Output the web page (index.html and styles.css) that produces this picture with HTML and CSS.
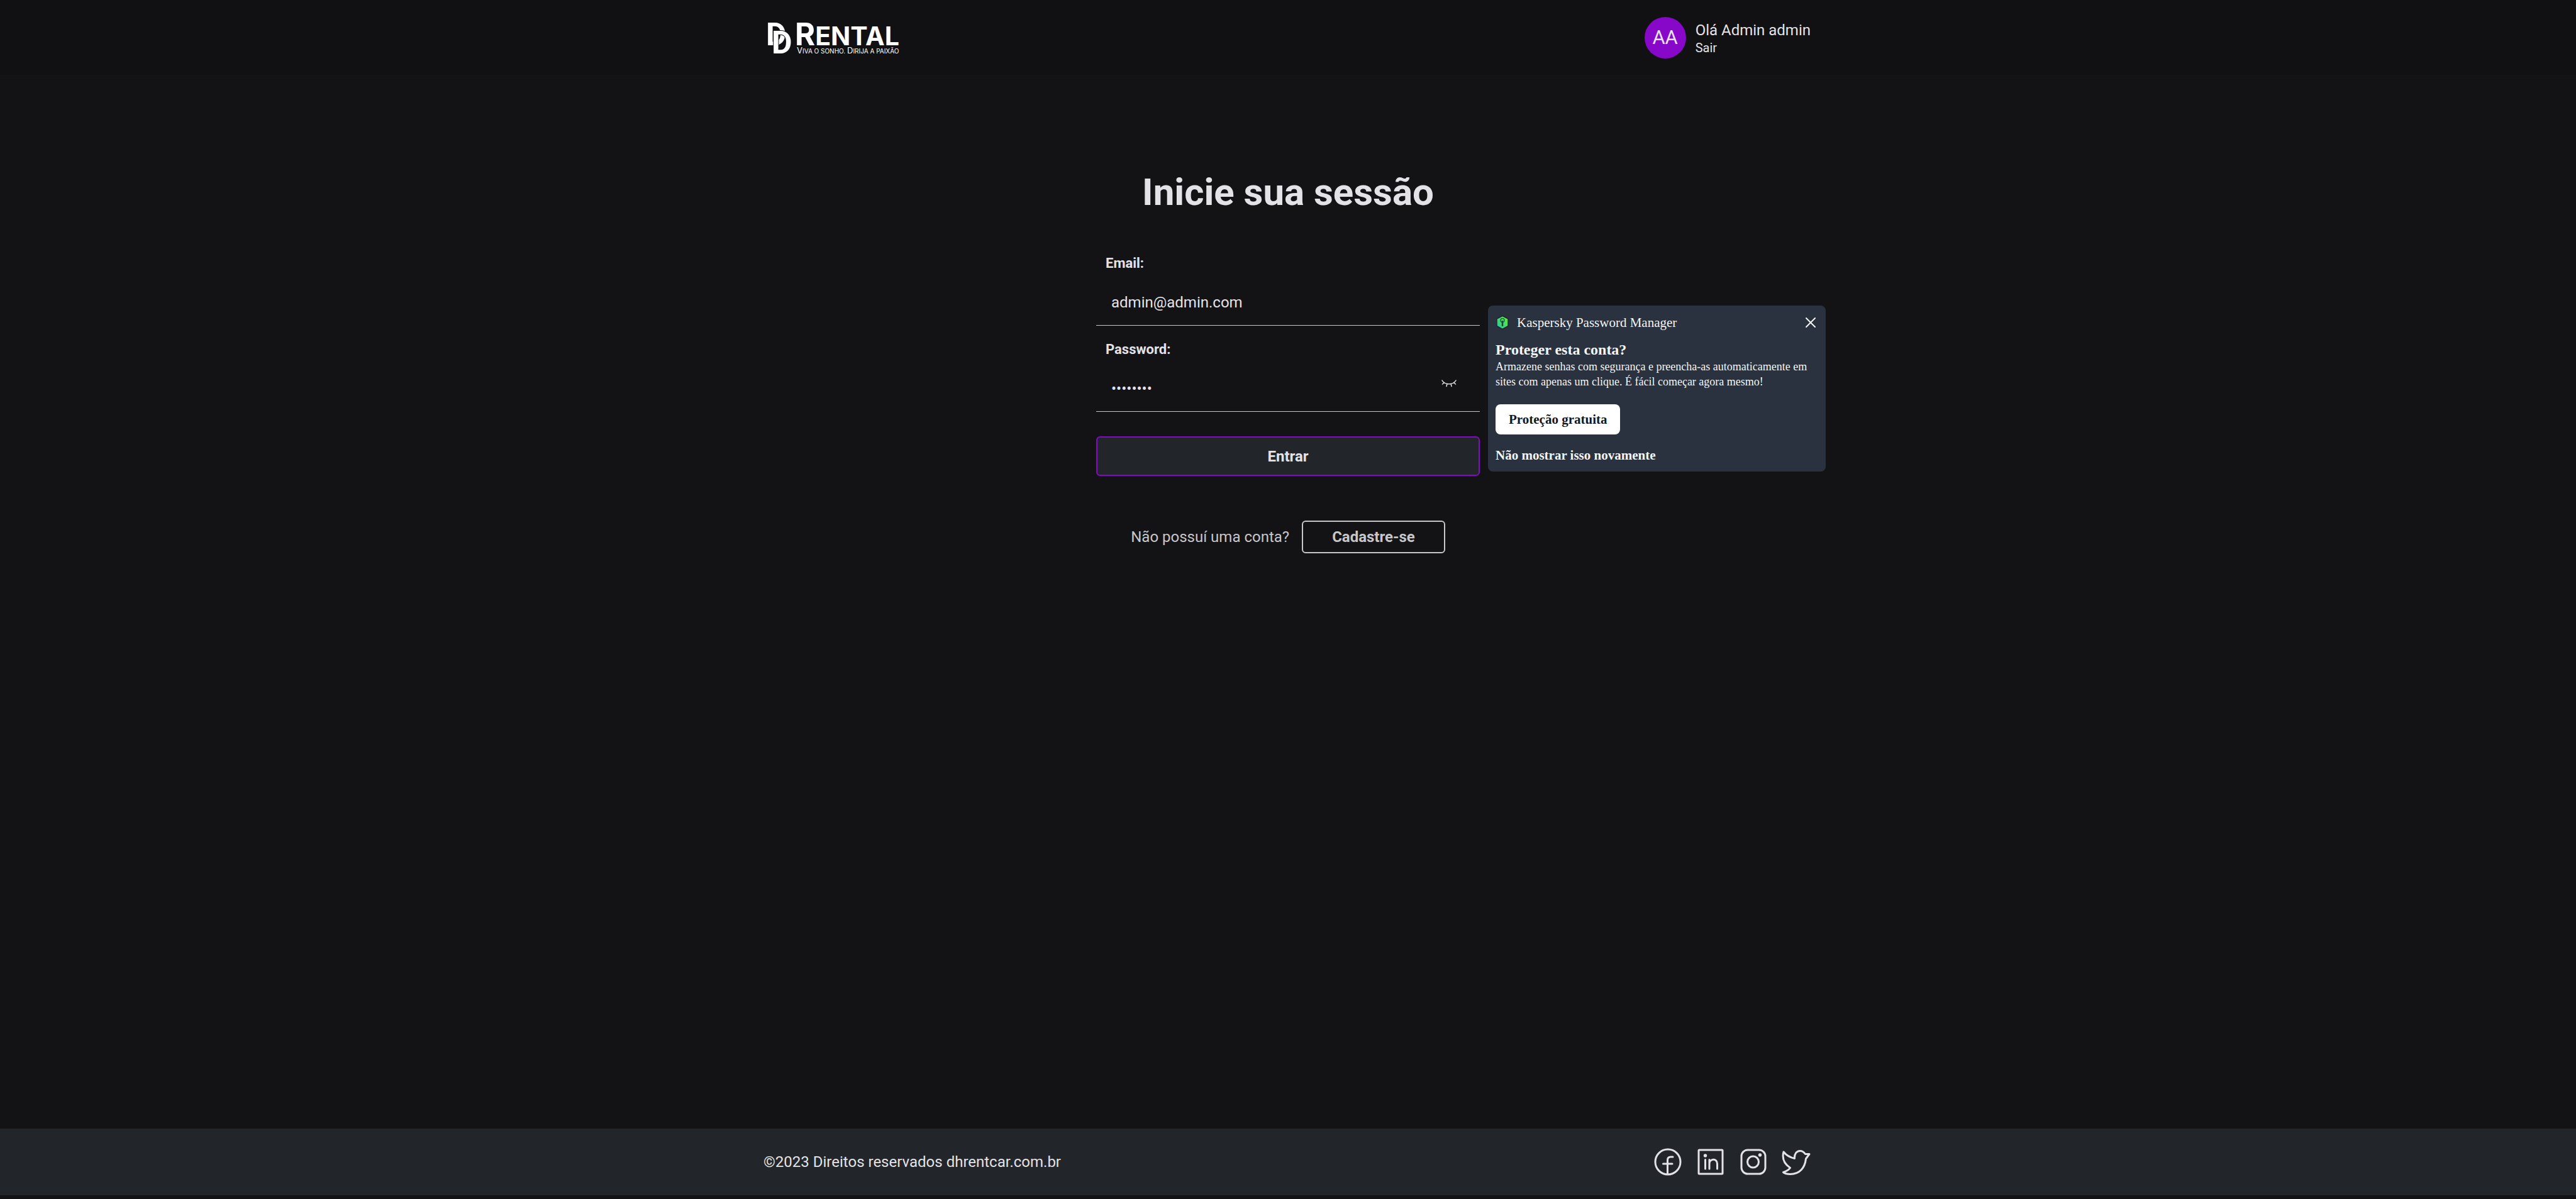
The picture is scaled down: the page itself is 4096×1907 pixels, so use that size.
FILE: index.html
```html
<!DOCTYPE html>
<html lang="pt-BR">
<head>
<meta charset="utf-8">
<meta name="viewport" content="width=device-width, initial-scale=1">
<title>DD Rental</title>
<link rel="stylesheet" href="styles.css">
</head>
<body>
<header class="header">
  <div class="container header-row">
    <a class="logo" href="#" aria-label="DD Rental">
      <svg width="226" height="80" viewBox="0 -12 226 80">
        <text class="logo-d" x="4" y="40">D</text>
        <text class="logo-d logo-d-front" x="13" y="53">D</text>
        <text class="logo-name" x="50" y="40"><tspan class="logo-cap">R</tspan>ENTAL</text>
        <text class="logo-tag" x="53" y="53"><tspan class="logo-tag-cap">V</tspan>IVA O SONHO. <tspan class="logo-tag-cap">D</tspan>IRIJA A PAIXÃO</text>
      </svg>
    </a>
    <div class="user">
      <span class="avatar">AA</span>
      <div class="user-info">
        <span class="user-name">Olá Admin admin</span>
        <a class="logout" href="#">Sair</a>
      </div>
    </div>
  </div>
</header>

<main class="main">
  <div class="login">
    <h1 class="title">Inicie sua sessão</h1>
    <form class="form">
      <label class="label" for="email">Email:</label>
      <input class="input" id="email" type="email" value="admin@admin.com">
      <label class="label" for="password">Password:</label>
      <div class="password">
        <input class="input" id="password" type="password" value="12345678">
        <button class="eye" type="button" aria-label="Mostrar senha">
          <svg width="24" height="12" viewBox="0 0 24 12" fill="none" stroke="currentColor" stroke-width="1.5" stroke-linecap="round">
            <path d="M1 1C5 8.500 19 8.500 23 1M4.500 4.500L1.500 7M19.500 4.500L22.500 7M9 6.500L8 10.500M15 6.500L16 10.500"/>
          </svg>
        </button>
      </div>
      <button class="submit" type="button">Entrar</button>
    </form>
    <div class="signup">
      <span>Não possuí uma conta?</span>
      <a class="signup-link" href="#">Cadastre-se</a>
    </div>

    <aside class="popup">
      <div class="popup-head">
        <svg width="22" height="24" viewBox="0 0 22 24">
          <defs>
            <linearGradient id="shield" x1="1" y1="0" x2="0" y2="1">
              <stop offset="0.200" stop-color="#5fe64a"/>
              <stop offset="1" stop-color="#1fc8a4"/>
            </linearGradient>
          </defs>
          <path d="M11 1.500L20 6V17.500L11 22.500L2 17.500V6Z" fill="url(#shield)" stroke="#1d2a33" stroke-width="1.500" stroke-linejoin="round"/>
          <circle cx="11" cy="8.500" r="3" fill="none" stroke="#1c6b42" stroke-width="1.500"/>
          <path d="M11 9V18" stroke="#174b38" stroke-width="2.500"/>
        </svg>
        <span class="popup-name">Kaspersky Password Manager</span>
        <button class="close" type="button" aria-label="Fechar">
          <svg width="16" height="16" viewBox="0 0 16 16" fill="none" stroke="currentColor" stroke-width="2" stroke-linecap="round"><path d="M1 1L15 15M15 1L1 15"/></svg>
        </button>
      </div>
      <h2 class="popup-title">Proteger esta conta?</h2>
      <p class="popup-text">Armazene senhas com segurança e preencha-as automaticamente em sites com apenas um clique. É fácil começar agora mesmo!</p>
      <button class="protect" type="button">Proteção gratuita</button>
      <a class="dismiss" href="#">Não mostrar isso novamente</a>
    </aside>
  </div>
</main>

<footer class="footer">
  <div class="container footer-row">
    <span>©2023 Direitos reservados dhrentcar.com.br</span>
    <nav class="social">
      <a href="#" aria-label="Facebook">
        <svg width="46" height="44" viewBox="0 0 46 44"><circle cx="23" cy="22" r="20"/><path d="M22.500 41V19Q22.500 14 27.500 14H31M15.500 25H30"/></svg>
      </a>
      <a href="#" aria-label="LinkedIn">
        <svg width="46" height="44" viewBox="0 0 46 44"><rect x="4" y="3" width="38" height="38" rx="1"/><path d="M14.500 18.500V33M21 33V18.500M21 25C21 16.500 33.500 15.500 33.500 25V33"/><circle class="dot" cx="14.500" cy="12" r="2.700"/></svg>
      </a>
      <a href="#" aria-label="Instagram">
        <svg width="46" height="44" viewBox="0 0 46 44"><rect x="4" y="3" width="38" height="38" rx="10"/><circle cx="22.500" cy="22" r="9"/><circle class="dot" cx="33.500" cy="11" r="2.700"/></svg>
      </a>
      <a href="#" aria-label="Twitter">
        <svg width="46" height="44" viewBox="0 0 46 44"><path d="M3 6C7 11 13.500 15 20.500 16.500C20 9 24 4.500 29 4.500C33 4.500 35.500 6.500 37.500 9.500L44 9.500L38.500 17C37 31 29 41.500 13.500 41.500C9 41.500 5 40.500 2.500 38.500C7 37 11 35 13.500 31.500C3 24.500 .5 15.500 3 6Z"/></svg>
      </a>
    </nav>
  </div>
</footer>
</body>
</html>
```
FILE: styles.css
```css
* { box-sizing: border-box; }

body {
  margin: 0;
  min-height: 100vh;
  display: flex;
  flex-direction: column;
  background: #131315;
  color: #e3e2e6;
  font-family: Roboto, "Liberation Sans", sans-serif;
  font-size: 24px;
  line-height: 28px;
}

a { color: inherit; text-decoration: none; }
button { font: inherit; color: inherit; cursor: pointer; }
svg { display: block; }

.container {
  width: 100%;
  max-width: 1668px;
  margin: 0 auto;
  padding-right: 3px;
}

/* Header */
.header {
  height: 120px;
  display: flex;
  background: #111113;
  box-shadow: 0 1px 2px #18181a;
}
.header-row {
  display: flex;
  align-items: center;
  justify-content: space-between;
}
.logo text { fill: #fff; font-family: Inter, sans-serif; font-weight: 700; }
.logo .logo-d { font-family: Roboto, sans-serif; font-size: 50px; }
.logo .logo-d-front { stroke: #111113; stroke-width: 2px; paint-order: stroke; }
.logo .logo-name { font-size: 41px; }
.logo .logo-cap { font-size: 49px; }
.logo .logo-tag { font-size: 10px; font-weight: 400; }
.logo .logo-tag-cap { font-size: 13px; }

.user { display: flex; align-items: center; gap: 15px; }
.avatar {
  width: 66px;
  height: 66px;
  border-radius: 50%;
  background: #8708c9;
  display: grid;
  place-items: center;
  font-size: 31px;
}
.user-info { display: flex; flex-direction: column; padding-top: 3px; }
.logout { font-size: 20px; }

/* Login */
.main {
  flex: 1;
  display: flex;
  justify-content: center;
  align-items: flex-start;
  padding-top: 150px;
}
.login { position: relative; width: 610px; }
.title {
  margin: 0;
  font-size: 60px;
  line-height: 72px;
  text-align: center;
}
.form { display: flex; flex-direction: column; margin-top: 63px; }
.label {
  padding-left: 15px;
  font-size: 22px;
  font-weight: 700;
  line-height: 28px;
}
.input {
  width: 100%;
  height: 85px;
  margin-bottom: 24px;
  padding: 12px 24px 0;
  border: 0;
  border-bottom: 1px solid #c7c6ca;
  background: none;
  color: inherit;
  font: inherit;
  outline: 0;
}
.password { position: relative; }
.eye {
  position: absolute;
  right: 37px;
  top: 34px;
  padding: 0;
  border: 0;
  background: none;
}
.submit {
  height: 63px;
  margin-top: 15px;
  border: 2px solid #8708c9;
  border-radius: 6px;
  background: #222529;
  font-weight: 700;
}
.signup {
  display: flex;
  align-items: center;
  justify-content: center;
  gap: 20px;
  margin-top: 71px;
  color: #c7c6ca;
}
.signup-link {
  padding: 10px 46px;
  border: 2px solid #c7c6ca;
  border-radius: 6px;
  font-weight: 700;
}

/* Password manager prompt */
.popup {
  position: absolute;
  left: 623px;
  top: 216px;
  width: 537px;
  padding: 13px 12px 12px 12px;
  border-radius: 8px;
  background: #29323e;
  color: #f3f5f7;
  font-family: "Liberation Serif", serif;
}
.popup-head { display: flex; align-items: center; gap: 12px; font-size: 21px; }
.close { margin-left: auto; padding: 4px; border: 0; background: none; }
.popup-title { margin: 15px 0 0; font-size: 24px; line-height: 28px; }
.popup-text { margin: 1px 0 0; font-size: 18px; line-height: 24px; }
.protect {
  display: block;
  height: 48px;
  margin: 24px 0 19px;
  padding: 0 21px;
  border: 0;
  border-radius: 8px;
  background: #fff;
  color: #16181c;
  font-size: 21px;
  font-weight: 700;
}
.dismiss { display: block; font-size: 21px; font-weight: 700; }

/* Footer */
.footer {
  height: 106px;
  margin-bottom: 6px;
  display: flex;
  background: #222529;
}
.footer-row {
  display: flex;
  align-items: center;
  justify-content: space-between;
}
.social { display: flex; gap: 22px; }
.social svg {
  fill: none;
  stroke: #e3e2e6;
  stroke-width: 3px;
  stroke-linecap: round;
  stroke-linejoin: round;
}
.social .dot { fill: #e3e2e6; stroke: none; }
```
